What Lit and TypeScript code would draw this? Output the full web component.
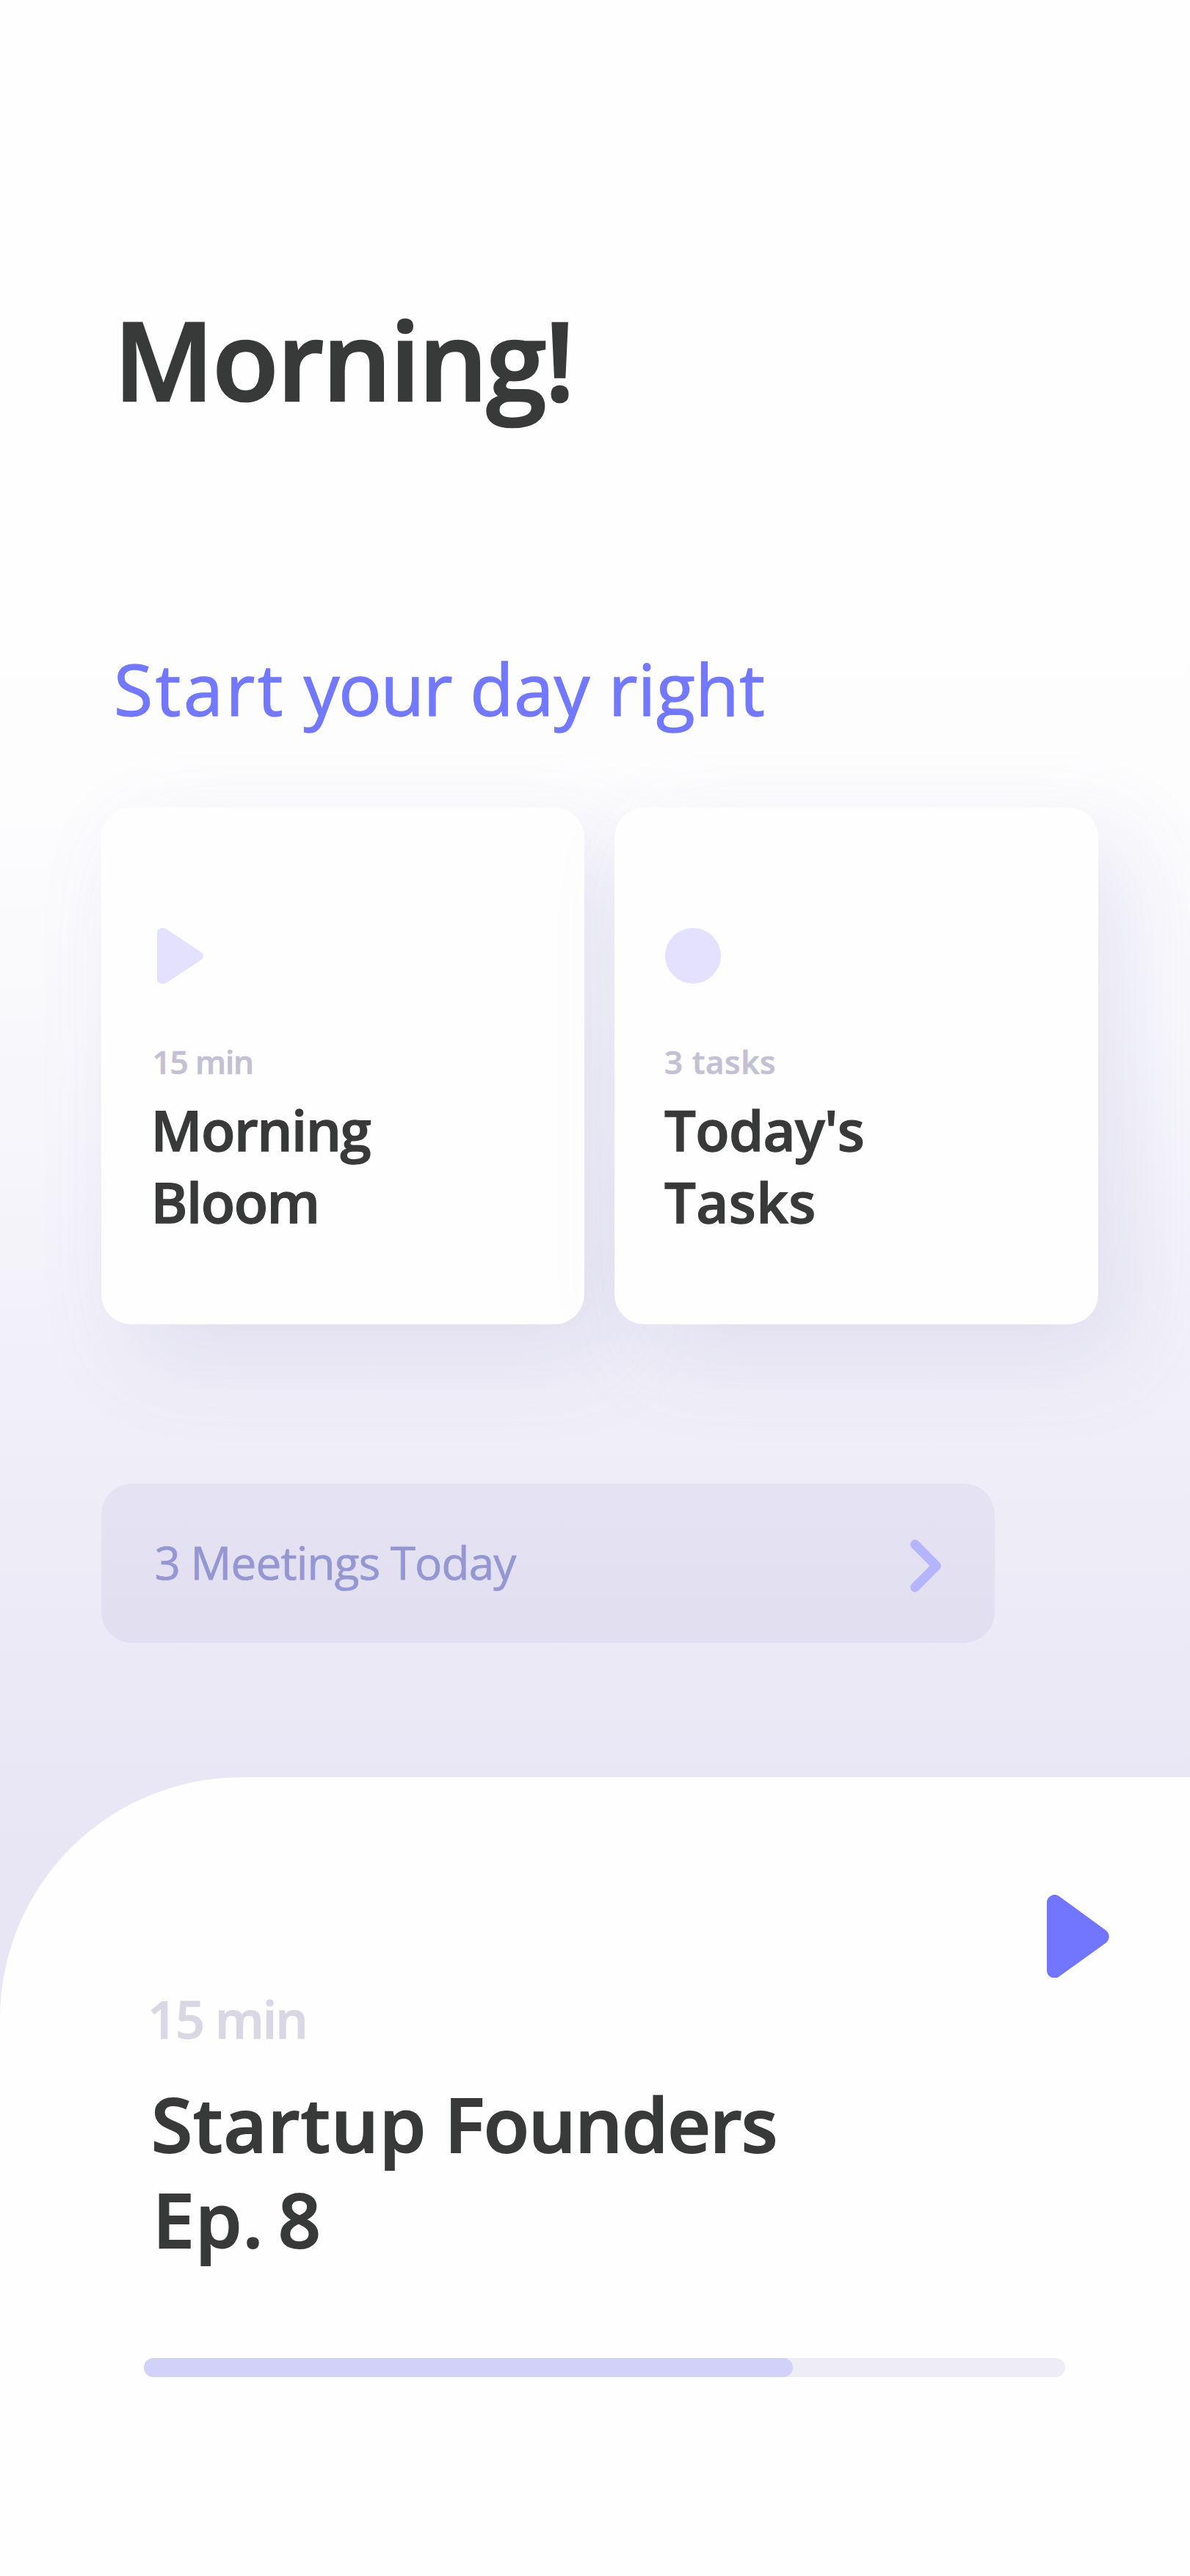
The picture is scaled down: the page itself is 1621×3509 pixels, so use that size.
import { LitElement, html, css, svg } from "lit";
import { customElement, property } from "lit/decorators.js";

const playShape = svg`<path d="M0 10.5A10.5 10.5 0 0 1 16.6 2L80.5 48.6A10.5 10.5 0 0 1 80.5 65.4L16.6 111.5A10.5 10.5 0 0 1 0 102.5Z" />`;

@customElement("task-card")
class TaskCard extends LitElement {
  @property() icon: "play" | "dot" = "play";
  @property() meta = "";
  @property({ attribute: false }) lines: string[] = [];

  static styles = css`
    :host {
      display: block;
      box-sizing: border-box;
      width: 658.5px;
      height: 704px;
      padding: 164px 67px 0;
      border-radius: 41px;
      background: #fefefe;
      box-shadow: 40px 42px 125px rgba(120, 110, 185, 0.145);
    }
    .icon {
      display: block;
      height: 76px;
      fill: #e3e1ff;
    }
    .play {
      width: 63px;
      margin-left: 9.5px;
    }
    .dot {
      width: 76px;
      margin-left: 1.5px;
    }
    .meta {
      margin: 76px 0 0 3px;
      font-size: 44px;
      line-height: 60px;
      font-weight: 600;
      letter-spacing: -1.08px;
      color: #c3c0d3;
      -webkit-text-stroke: 0.016em;
    }
    .title {
      margin: 14px 0 0 1px;
      font-size: 76px;
      line-height: 98px;
      font-weight: 600;
      letter-spacing: -1.5px;
      color: #383a39;
      -webkit-text-stroke: 0.018em;
    }
    :host([icon="dot"]) .meta {
      margin-left: 1px;
      letter-spacing: 0.65px;
    }
    :host([icon="dot"]) .title {
      letter-spacing: -0.7px;
    }
    :host([icon="dot"]) .line:last-child {
      letter-spacing: 0.4px;
    }
  `;

  render() {
    return html`
      ${this.icon === "play"
        ? html`<svg class="icon play" viewBox="0 0 85 113" preserveAspectRatio="none">${playShape}</svg>`
        : html`<svg class="icon dot" viewBox="0 0 76 76"><circle cx="38" cy="38" r="38" /></svg>`}
      <div class="meta">${this.meta}</div>
      <div class="title">${this.lines.map((l) => html`<div class="line">${l}</div>`)}</div>
    `;
  }
}

@customElement("app-root")
class AppRoot extends LitElement {
  private progress = 70.46;

  static styles = css`
    :host {
      display: block;
      width: 1621px;
      height: 3509px;
      overflow: hidden;
      font-family: "Open Sans", "Noto Sans", sans-serif;
      background: linear-gradient(
        #fefefe 0,
        #fefefe 820px,
        #fdfdfe 1060px,
        #f9f9fc 1350px,
        #f2f1f9 1800px,
        #eeecf7 2080px,
        #e9e7f5 2420px,
        #e7e4f4 2760px
      );
    }
    .page {
      display: flex;
      flex-direction: column;
      height: 100%;
    }
    h1,
    h2 {
      margin: 0;
    }
    h1 {
      padding: 399px 0 0 155px;
      font-size: 148px;
      line-height: 180px;
      font-weight: 600;
      letter-spacing: -2.1px;
      color: #383a39;
      -webkit-text-stroke: 0.018em;
    }
    h2 {
      padding: 298px 0 0 155px;
      font-size: 97px;
      line-height: 120px;
      font-weight: 400;
      letter-spacing: 0.6px;
      word-spacing: -1px;
      color: #7278ff;
      -webkit-text-stroke: 0.014em;
    }
    .loose {
      letter-spacing: 3.6px;
    }
    .tight {
      letter-spacing: -1.1px;
    }
    .cards {
      display: flex;
      gap: 41px;
      padding: 103px 0 0 137.5px;
    }
    .banner {
      display: flex;
      align-items: center;
      justify-content: space-between;
      box-sizing: border-box;
      width: 1217px;
      height: 217px;
      margin: 217px 0 0 137.5px;
      padding: 0 73px 4px 73px;
      border-radius: 42px;
      background: rgba(120, 110, 200, 0.082);
      font-size: 62px;
      line-height: 80px;
      letter-spacing: -0.8px;
      word-spacing: -1px;
      color: #9597d3;
      -webkit-text-stroke: 0.012em;
    }
    .chevron {
      width: 42px;
      height: 72px;
      margin-top: 11px;
      fill: none;
      stroke: #b4b4ff;
      stroke-width: 12.7;
      stroke-linecap: round;
      stroke-linejoin: round;
    }
    .sheet {
      box-sizing: border-box;
      flex: 1;
      margin-top: 183px;
      padding: 160px 0 0 205px;
      border-top-left-radius: 329px;
      background: #fefefe;
    }
    .play {
      display: block;
      width: 85px;
      height: 113px;
      margin-left: 1221px;
      fill: #7276ff;
    }
    .meta {
      margin: 11px 0 0 -4px;
      font-size: 70px;
      line-height: 90px;
      font-weight: 600;
      letter-spacing: -2.04px;
      color: #d9d7e3;
      -webkit-text-stroke: 0.016em;
    }
    .title {
      margin: 33px 0 0 1px;
      font-size: 102px;
      line-height: 130px;
      font-weight: 600;
      letter-spacing: -1.2px;
      word-spacing: -1px;
      color: #383a39;
      -webkit-text-stroke: 0.018em;
    }
    .first {
      letter-spacing: 1px;
    }
    .episode {
      margin-left: 2px;
      letter-spacing: 1px;
      word-spacing: -8px;
    }
    .track {
      width: 1255px;
      height: 26px;
      margin: 123.5px 0 0 -9px;
      border-radius: 13px;
      background: #eeecf7;
    }
    .fill {
      height: 100%;
      border-radius: 13px;
      background: #d2d1f9;
    }
  `;

  render() {
    return html`
      <div class="page">
        <h1>Morning!</h1>
        <h2><span class="loose">Start</span> <span class="tight">your</span> day right</h2>
        <div class="cards">
          <task-card icon="play" meta="15 min" .lines=${["Morning", "Bloom"]}></task-card>
          <task-card icon="dot" meta="3 tasks" .lines=${["Today's", "Tasks"]}></task-card>
        </div>
        <div class="banner">
          <span>3 Meetings Today</span>
          <svg class="chevron" viewBox="0 0 42 72"><path d="M6.4 6.7L35.4 36L6.4 65.3" /></svg>
        </div>
        <div class="sheet">
          <svg class="play" viewBox="0 0 85 113">${playShape}</svg>
          <div class="meta">15 min</div>
          <div class="title">
            <div><span class="first">Startup</span> Founders</div>
            <div class="episode">Ep. 8</div>
          </div>
          <div class="track"><div class="fill" style="width:${this.progress}%"></div></div>
        </div>
      </div>
    `;
  }
}
